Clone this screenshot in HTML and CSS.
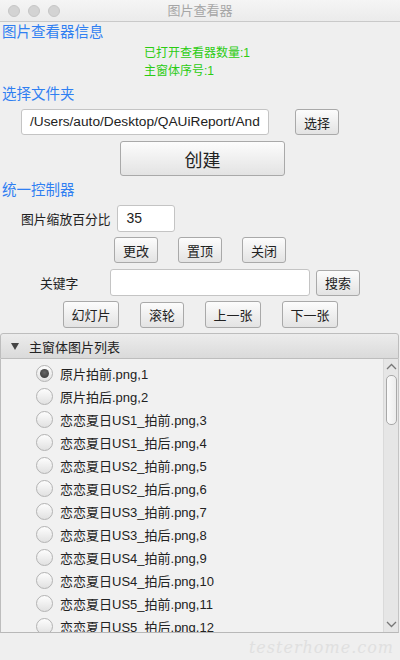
FILE: index.html
```html
<!DOCTYPE html>
<html lang="zh-CN">
<head>
    <meta charset="UTF-8">
    <title>图片查看器</title>
    <link rel="stylesheet" href="styles.css">
</head>
<body>
<div class="window">
    <div class="titlebar">
        <div class="lights">
            <span class="light"></span>
            <span class="light"></span>
            <span class="light"></span>
        </div>
        <div class="title">图片查看器</div>
    </div>

    <div class="sec-title">图片查看器信息</div>
    <div class="info">
        <div>已打开查看器数量:1</div>
        <div>主窗体序号:1</div>
    </div>

    <div class="sec-title sec-gap">选择文件夹</div>
    <div class="row path-row">
        <div class="field path-field">/Users/auto/Desktop/QAUiReport/And</div>
        <button class="btn btn-sm">选择</button>
    </div>
    <div class="row create-row">
        <button class="btn btn-create">创建</button>
    </div>

    <div class="sec-title sec-gap">统一控制器</div>
    <div class="row zoom-row">
        <span class="label">图片缩放百分比</span>
        <div class="field zoom-field">35</div>
    </div>
    <div class="row btn-row1">
        <button class="btn btn-sm">更改</button>
        <button class="btn btn-sm">置顶</button>
        <button class="btn btn-sm">关闭</button>
    </div>
    <div class="row kw-row">
        <span class="label kw-label">关键字</span>
        <div class="field kw-field"></div>
        <button class="btn btn-sm">搜索</button>
    </div>
    <div class="row btn-row2">
        <button class="btn btn-md">幻灯片</button>
        <button class="btn btn-sm">滚轮</button>
        <button class="btn btn-md">上一张</button>
        <button class="btn btn-md">下一张</button>
    </div>

    <div class="panel">
        <div class="panel-head">
            <span class="arrow"></span>
            <span>主窗体图片列表</span>
        </div>
        <div class="panel-body">
            <ul class="file-list">
                <li class="item"><span class="radio checked"></span>原片拍前.png,1</li>
                <li class="item"><span class="radio"></span>原片拍后.png,2</li>
                <li class="item"><span class="radio"></span>恋恋夏日US1_拍前.png,3</li>
                <li class="item"><span class="radio"></span>恋恋夏日US1_拍后.png,4</li>
                <li class="item"><span class="radio"></span>恋恋夏日US2_拍前.png,5</li>
                <li class="item"><span class="radio"></span>恋恋夏日US2_拍后.png,6</li>
                <li class="item"><span class="radio"></span>恋恋夏日US3_拍前.png,7</li>
                <li class="item"><span class="radio"></span>恋恋夏日US3_拍后.png,8</li>
                <li class="item"><span class="radio"></span>恋恋夏日US4_拍前.png,9</li>
                <li class="item"><span class="radio"></span>恋恋夏日US4_拍后.png,10</li>
                <li class="item"><span class="radio"></span>恋恋夏日US5_拍前.png,11</li>
                <li class="item"><span class="radio"></span>恋恋夏日US5_拍后.png,12</li>
            </ul>
            <div class="scrollbar">
                <svg class="sb-arrow" width="11" height="7" viewBox="0 0 11 7"><path d="M1 6 L5.5 1.5 L10 6" fill="none" stroke="#777" stroke-width="1.3"/></svg>
                <div class="sb-thumb"></div>
                <div class="sb-space"></div>
                <svg class="sb-arrow" width="11" height="7" viewBox="0 0 11 7"><path d="M1 1 L5.5 5.5 L10 1" fill="none" stroke="#777" stroke-width="1.3"/></svg>
            </div>
        </div>
    </div>
    <div class="footer">
        <span class="watermark">testerhome.com</span>
    </div>
</div>
</body>
</html>
```

FILE: styles.css
```css
* {
    margin: 0;
    padding: 0;
    box-sizing: border-box;
}

body {
    width: 400px;
    height: 660px;
    overflow: hidden;
    background-color: #efefef;
    font: 13px "Liberation Sans", "Noto Sans CJK SC", sans-serif;
    color: #222;
}

.window {
    width: 400px;
    height: 660px;
}

/*标题栏*/
.titlebar {
    position: relative;
    height: 22px;
    border-bottom: 1px solid #c9c9c9;
    background: linear-gradient(#f5f5f5, #ebebeb);
}

.lights {
    display: flex;
    gap: 8px;
    padding: 5px 0 0 8px;
}

.light {
    width: 12px;
    height: 12px;
    border-radius: 50%;
    background-color: #d3d3d3;
    border: 1px solid #c6c6c6;
}

.title {
    position: absolute;
    left: 0;
    right: 0;
    top: 0;
    text-align: center;
    line-height: 21px;
    font-size: 13px;
    color: #a6a6a6;
}

/*分区标题*/
.sec-title {
    padding-left: 2px;
    height: 20px;
    line-height: 20px;
    font-size: 14.5px;
    color: #2f7ff2;
}

.sec-gap {
    margin-top: 4px;
}

.info {
    margin-top: 2px;
    padding-left: 144px;
    font-size: 12px;
    line-height: 18px;
    color: #2bcc12;
}

.row {
    display: flex;
    align-items: center;
}

.field {
    background-color: #fff;
    border: 1px solid #c4c4c4;
    border-radius: 3px;
}

.btn {
    height: 26px;
    border: 1px solid #a9a9a9;
    border-radius: 3px;
    background: linear-gradient(#fcfcfc, #e3e3e3);
    font: 13px "Liberation Sans", "Noto Sans CJK SC", sans-serif;
    color: #222;
}

.btn-sm {
    width: 44px;
}

.btn-md {
    width: 56px;
    height: 27px;
}

/*选择文件夹*/
.path-row {
    margin-top: 5px;
    padding-left: 21px;
    gap: 26px;
}

.path-field {
    width: 248px;
    height: 26px;
    padding-left: 8px;
    line-height: 24px;
    font-size: 13.7px;
    white-space: nowrap;
    overflow: hidden;
}

.create-row {
    margin-top: 6px;
    padding-left: 120px;
}

.btn-create {
    width: 165px;
    height: 35px;
    font-size: 18px;
}

/*统一控制器*/
.zoom-row {
    margin-top: 5px;
    padding-left: 21px;
    gap: 6px;
}

.label {
    font-size: 12.8px;
}

.zoom-field {
    width: 58px;
    height: 27px;
    padding-left: 9px;
    line-height: 25px;
    font-size: 14px;
}

.btn-row1 {
    margin-top: 5px;
    padding-left: 114px;
    gap: 20px;
}

.kw-row {
    margin-top: 6px;
    padding-left: 40px;
}

.kw-label {
    width: 70px;
}

.kw-field {
    width: 200px;
    height: 27px;
    margin-right: 6px;
}

.btn-row2 {
    margin-top: 5px;
    padding-left: 63px;
    gap: 21px;
}

/*图片列表面板*/
.panel {
    margin-top: 5px;
    width: 399px;
}

.panel-head {
    display: flex;
    align-items: center;
    gap: 10px;
    height: 26px;
    padding-left: 10px;
    border: 1px solid #bdbdbd;
    border-radius: 3px 3px 0 0;
    background: linear-gradient(#ececec, #dadada);
}

.arrow {
    width: 0;
    height: 0;
    border-left: 4px solid transparent;
    border-right: 4px solid transparent;
    border-top: 7px solid #444;
}

.panel-body {
    display: flex;
    height: 274px;
    border-left: 1px solid #bdbdbd;
    border-right: 1px solid #c4c4c4;
    border-bottom: 1px solid #b8b8b8;
    background-color: #f1f1f1;
}

.file-list {
    flex: 1;
    overflow: hidden;
    padding: 3px 0 0 35px;
    list-style: none;
}

.item {
    display: flex;
    align-items: center;
    gap: 7px;
    height: 23px;
    font-size: 13px;
    white-space: nowrap;
}

.radio {
    position: relative;
    width: 17px;
    height: 17px;
    border-radius: 50%;
    border: 1px solid #b3b3b3;
    background: linear-gradient(#fdfdfd, #e1e1e1);
}

.radio.checked::after {
    content: '';
    position: absolute;
    left: 3px;
    top: 3px;
    width: 9px;
    height: 9px;
    border-radius: 50%;
    background: radial-gradient(circle at 50% 40%, #666, #333);
}

.scrollbar {
    display: flex;
    flex-direction: column;
    align-items: center;
    width: 15px;
    border-left: 1px solid #dadada;
    background-color: #e6e6e6;
}

.sb-arrow {
    margin: 4px 0;
}

.sb-thumb {
    width: 11px;
    height: 50px;
    margin-top: 1px;
    border: 1px solid #a8a8a8;
    border-radius: 5px;
    background: linear-gradient(90deg, #fbfbfb, #ececec);
}

.sb-space {
    flex: 1;
}

.footer {
    position: relative;
    height: 27px;
}

.watermark {
    position: absolute;
    right: 6px;
    top: 5px;
    font: italic 16px "DejaVu Serif", serif;
    letter-spacing: 1px;
    color: #e0e0e0;
}
```
